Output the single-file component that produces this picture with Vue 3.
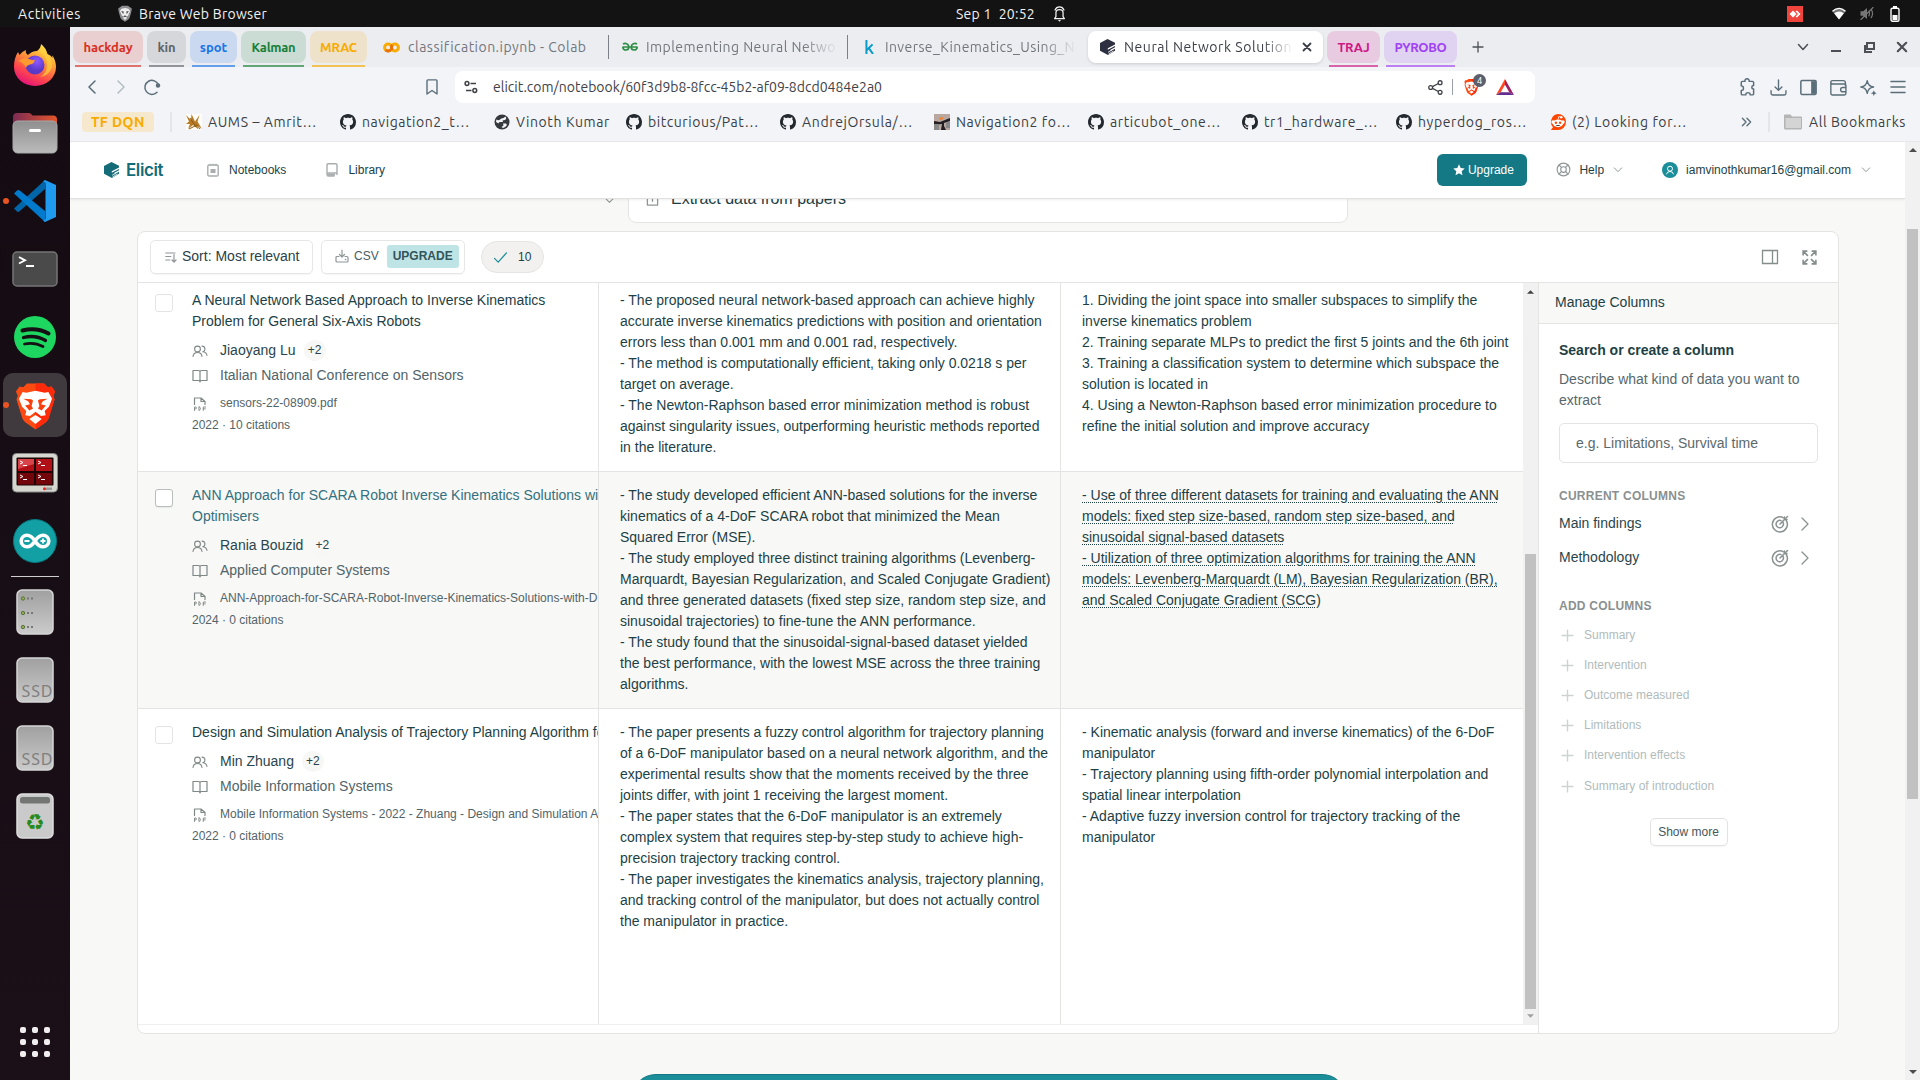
<script setup>
import { h } from 'vue'

// Each icon: [viewBox, inner markup]
const S = 'fill="none" stroke="currentColor" stroke-linecap="round" stroke-linejoin="round"'
const lion = '<path d="M9 2h14l3 3 3-.5 3 4-1.500 3.500 1 3-4.500 14.500c-.5 2-1.600 3.300-3.200 4.500L16 39.500l-7.800-5.500C6.600 32.800 5.500 31.500 5 29.500L.5 15l1-3L0 8.500l3-4L6 5z" fill="#fb4a12"/><path d="M16 2h7l3 3 3-.5 3 4-1.500 3.500 1 3-4.500 14.500c-.5 2-1.600 3.300-3.200 4.500L16 39.500z" fill="#ff2a0a"/><path d="M8.500 9.500L16 8l7.500 1.500 3-.5 3 5.500L27 21l-3.500 3.500.8 3.500-3.800.5L16 25l-4.500 3.500-3.800-.5.8-3.500L5 21l-2.500-6.500 3-5.500z" fill="#fff"/><path d="M6 14.500l6.500.3 1.500 1.200-1.200 4.500 1.200 2-3 1.500-3.500-4 4-1-1.500-2.500zM26 14.500l-6.500.3-1.500 1.200 1.200 4.500-1.200 2 3 1.500 3.500-4-4-1 1.500-2.500z" fill="#f8400f"/><path d="M11 31l5-3.200 5 3.200-5 4z" fill="#fff"/>'
const icons = {
  github: ['0 0 16 16', '<path fill="#24292f" d="M8 0C3.580 0 0 3.580 0 8c0 3.540 2.290 6.530 5.470 7.590.4.070.55-.17.55-.38 0-.19-.01-.82-.01-1.490-2.010.37-2.530-.49-2.690-.94-.09-.23-.48-.94-.82-1.130-.28-.15-.68-.52-.01-.53.63-.01 1.080.58 1.230.82.72 1.210 1.870.87 2.330.66.070-.52.28-.87.51-1.070-1.780-.2-3.640-.89-3.640-3.950 0-.87.31-1.590.82-2.150-.08-.2-.36-1.020.08-2.120 0 0 .67-.21 2.200.82.64-.18 1.320-.27 2-.27.68 0 1.360.09 2 .27 1.530-1.040 2.200-.82 2.200-.82.44 1.100.16 1.920.08 2.120.51.56.82 1.270.82 2.150 0 3.070-1.870 3.750-3.650 3.950.29.25.54.73.54 1.480 0 1.070-.01 1.930-.01 2.200 0 .21.15.46.55.38A8.013 8.013 0 0016 8c0-4.420-3.580-8-8-8z"/>'],
  lion: ['0 0 32 40', lion],
  lionGrey: ['0 0 32 40', '<path d="M9 2h14l9 6.500-1 6.500-4 14.500c-.5 2-1.600 3.300-3.200 4.500L16 39.500l-7.800-5.500C6.600 32.800 5.500 31.500 5 29.500L1 15 0 8.500z" fill="#8b8d90"/><path d="M8 9l8-2 8 2 4 5-5 11-4 2 1 4-4 4-4-4 1-4-4-2-5-11z" fill="#eee"/><path d="M7 14l6 1-1 7zM25 14l-6 1 1 7zM12 27l4-3 4 3-4 2z" fill="#4b4b4d"/>'],
  colab: ['0 0 16 16', `<g fill="none" stroke-width="2.800"><circle cx="4.800" cy="8" r="3.300" stroke="#f9ab00"/><path d="M2.500 10.300a3.300 3.300 0 0 0 4.600 0" stroke="#e8710a"/><circle cx="11.200" cy="8" r="3.300" stroke="#f9ab00"/><path d="M8.900 10.300a3.300 3.300 0 0 1 0-4.600" stroke="#e8710a"/></g>`],
  gfg: ['0 0 16 16', `<g fill="none" stroke="#2f8d46" stroke-width="1.700"><path d="M.5 8h15M1 5.200C3 3.600 6.800 4.600 6.800 8c0 4-5.600 4-6 0M15 5.200C13 3.600 9.200 4.600 9.200 8c0 4 5.600 4 6 0"/></g>`],
  kaggle: ['0 0 10 16', '<path d="M1.500 0v16M8.500 5L2 11.500M4.300 9.300L9 16" fill="none" stroke="#0a9bc9" stroke-width="2.300"/>'],
  elicit: ['0 0 16 16', '<path fill="currentColor" d="M7.500 0L15 3.800v1.700L7.800 9.300v1.500L15 7v1.200l-4.500 2.500v1.500L15 9.800v2L8 16 0 11.800V4z"/><path d="M8 13.300l3.500-2M8.500 15l5-3" stroke="#fff" stroke-width=".8"/>'],
  x: ['0 0 10 10', `<path ${S} stroke-width="1.800" d="M1.500 1.500l7 7M8.500 1.500l-7 7"/>`],
  plus: ['0 0 12 12', `<path ${S} stroke-width="1.300" d="M6 1v10M1 6h10"/>`],
  chevD: ['0 0 12 12', `<path ${S} stroke-width="1.500" d="M1.500 3.500L6 8.500l4.500-5"/>`],
  chevThin: ['0 0 12 12', `<path ${S} stroke-width="1.200" d="M1.500 3.500L6 8l4.500-4.500"/>`],
  chevR: ['0 0 8 14', `<path ${S} stroke-width="1.300" d="M1 1l6 6-6 6"/>`],
  chevL: ['0 0 8 14', `<path ${S} stroke-width="1.500" d="M7 1L1 7l6 6"/>`],
  min: ['0 0 12 12', '<path d="M1 10h10" stroke="currentColor" stroke-width="2"/>'],
  restore: ['0 0 12 12', '<path d="M4 2h7v6H4zM2 4v7h7" fill="none" stroke="currentColor" stroke-width="2"/>'],
  reload: ['0 0 18 18', `<path ${S} stroke-width="1.500" d="M14 14.200A7 7 0 1 1 15.500 7"/><circle cx="15" cy="7.500" r="2.200" fill="currentColor"/>`],
  mark: ['0 0 12 16', `<path ${S} stroke-width="1.400" d="M1 1.800q0-.9.900-.9h8.200q.9 0 .9.900V15l-5-3.500L1 15z"/>`],
  tune: ['0 0 14 14', `<g fill="none" stroke="currentColor" stroke-width="1.500"><circle cx="3" cy="3.500" r="1.900"/><path d="M6.500 3.500H12M2 10.500h5.500"/><circle cx="10.800" cy="10.500" r="1.900"/></g>`],
  share: ['0 0 14 14', `<g fill="none" stroke="currentColor" stroke-width="1.200"><circle cx="2.500" cy="7" r="1.800"/><circle cx="11.300" cy="2.500" r="1.800"/><circle cx="11.300" cy="11.500" r="1.800"/><path d="M4.200 6.200l5.500-2.900M4.200 7.800l5.500 2.900"/></g>`],
  bat: ['0 0 18 16', '<path d="M9 0L0 16l4.700-2.800L9 5.700z" fill="#ff4724"/><path d="M9 0l9 16-4.700-2.800L9 5.700z" fill="#9e1f63"/><path d="M0 16h18l-4.700-2.800H4.700z" fill="#662d91"/>'],
  puzzle: ['0 0 16 16', `<path ${S} stroke-width="1.300" d="M2 4q0-1 1-1h2.300a1.900 1.900 0 1 1 3.700 0H12q1 0 1 1v2.600a1.600 1.600 0 0 0 0 3.200 1.600 1.600 0 0 1 0 1V14q0 1-1 1h-2a2 2 0 0 0-4 0H3q-1 0-1-1v-3a2 2 0 0 0 0-4z"/>`],
  down: ['0 0 16 16', `<path ${S} stroke-width="1.300" d="M8 1v9.500M4.800 7.500L8 10.700l3.200-3.200M1 11v2.500Q1 15 2.500 15h11q1.500 0 1.500-1.500V11"/>`],
  side: ['0 0 16 16', '<rect x=".8" y="1.500" width="14.400" height="13" rx="1" fill="none" stroke="currentColor" stroke-width="1.400"/><path d="M10.500 2H15v12h-4.500z" fill="currentColor"/>'],
  wallet: ['0 0 16 16', `<path ${S} stroke-width="1.300" d="M14.500 6V3.500Q14.500 1.500 12.500 1.500H2.500Q.8 1.500.8 3.300q0 1.400 1.700 1.400h11Q15 4.700 15 6.200v7.300q0 1.500-1.500 1.500h-11Q.8 15 .8 13.300v-10M15 8h-3a2 2 0 0 0 0 4h3z"/>`],
  spark: ['0 0 16 16', `<path ${S} stroke-width="1.300" d="M6.800 1.500Q7.500 6.800 12.800 7.500 7.500 8.200 6.800 13.500 6.100 8.200.8 7.500 6.100 6.800 6.800 1.500z"/><path d="M13 10.500l.8 2 2 .8-2 .8-.8 2-.8-2-2-.8 2-.8z" fill="currentColor"/>`],
  menu: ['0 0 16 14', `<path ${S} stroke-width="1.500" d="M1 1.500h14M1 7h14M1 12.500h14"/>`],
  aums: ['0 0 16 16', '<rect width="16" height="16" fill="#fffdf8"/><path d="M0 1l5 5L5.500 0 9 7.500 13.500 1l-2 6.500L16 15l-5-4 1.500 4.500L7 11l-5 4 2-5-4 0 3-2.500z" fill="#b87a25"/><path d="M3 15l8-4 3 4M4 4l6 9" stroke="#8b5a14" fill="none"/>'],
  globe: ['0 0 16 16', '<circle cx="8" cy="8" r="7.500" fill="#35383c"/><path d="M11.500 2.500Q13 4.500 11 6L8.500 6.500 9 8H6q-1.500 0-1.500 1.500L2 8q0-1 .5-2.500Q5 7 6 5.500T9.500 4zM9 9.500h3l1 1.500q-1.500 2.500-4 3l-1.500-1 2-1.500z" fill="#f3f4f7"/>'],
  nav2: ['0 0 16 16', '<rect width="16" height="16" fill="#b8a8a0"/><path d="M0 7l6 1 10-4v3l-6 2v3l2 4H7l1-6-8 1z" fill="#241f22"/><path d="M5 4l4-1v2l-3 1z" fill="#f08030"/><path d="M0 10h5v6H0zM12 8h4v6h-4z" fill="#888"/>'],
  reddit: ['0 0 16 16', '<path d="M8 0a8 8 0 1 1 0 16H.8L3 13.300A8 8 0 0 1 8 0z" fill="#ff4500"/><circle cx="3" cy="8" r="1.700" fill="#fff"/><circle cx="13" cy="8" r="1.700" fill="#fff"/><ellipse cx="8" cy="9.300" rx="5.200" ry="3.900" fill="#fff"/><circle cx="5.900" cy="8.700" r="1.200" fill="#ff4500"/><circle cx="10.100" cy="8.700" r="1.200" fill="#ff4500"/><path d="M5.500 11q2.500 2 5 0z" fill="#222"/><path d="M8 5.500l.8-3 2 .6" stroke="#fff" fill="none" stroke-width=".8"/><circle cx="11.300" cy="3.200" r="1.200" fill="#fff"/>'],
  dbl: ['0 0 12 12', `<path ${S} stroke-width="1.500" d="M1.500 2l4 4-4 4M6.500 2l4 4-4 4"/>`],
  folder: ['0 0 18 16', '<path d="M0 1.500Q0 .5 1 .5h5.500L8 2.500h9q1 0 1 1V14q0 1.500-1.500 1.500h-15Q0 15.500 0 14z" fill="#b4b4b4"/><path d="M1.500 4h15.500v10H1.500z" fill="#d4d4d4"/>'],
  bell: ['0 0 14 18', `<path ${S} stroke-width="1.400" d="M1.500 14.300h11L11 12V7.500Q11 4 7 4T3 7.500V12zM2 4.500Q3.500 1 7 1t5 3.500"/><path d="M5.300 15.800h3.400L7 17.800z" fill="currentColor"/>`],
  anydesk: ['0 0 16 16', '<rect width="16" height="16" fill="#ef443b"/><path d="M6 4.500L9.500 8 6 11.500 2.500 8zM8.500 5.300L10 4.500 13.500 8 10 11.500l-1.500-.8L11 8z" fill="#fff"/>'],
  wifi: ['0 0 16 14', '<path d="M8 13.500L.8 4.500Q8-2 15.200 4.500z" fill="#777"/><path d="M8 13.500L2.800 6.800q5.200-4 10.400 0z" fill="#fff"/><path d="M1 4.500Q8-1.500 15 4.500" fill="none" stroke="#fff" stroke-width="1.400"/>'],
  mute: ['0 0 16 14', `<path d="M1 4.500h3L8 1v12L4 9.500H1z" fill="currentColor"/><path ${S} stroke-width="1.300" d="M10 4.500q1.500 2.500 0 5M12.500 2.500q3 4.500 0 9M1.500 13.500L14.500.5"/>`],
  batt: ['0 0 10 16', '<rect x="1" y="2.200" width="8" height="13" rx="1.500" fill="none" stroke="#fff" stroke-width="1.400"/><path d="M3 0h4v2H3zM2.500 9h5v5h-5z" fill="#fff"/>'],
  notebook: ['0 0 12 14', `<rect x=".8" y="2" width="10.400" height="11" rx="1.300" ${S} stroke-width="1.400"/><path d="M3 .8v2M6 .8v2M9 .8v2" stroke="currentColor" stroke-width="1.200"/><path d="M3.500 6h5v4h-5z" fill="currentColor"/>`],
  library: ['0 0 12 14', `<path ${S} stroke-width="1.400" d="M1 11.500V2q0-1.200 1.200-1.200h7.600Q11 .8 11 2v8H2.500q-1.500 0-1.500 1.500T2.500 13H8M11 10v1.500"/><path d="M1.500 10.800h7.500v2H2z" fill="currentColor"/>`],
  star: ['0 0 12 12', '<path fill="currentColor" d="M6 .3l1.700 3.700 4 .5-3 2.700.8 4L6 9.200l-3.500 2 .8-4-3-2.700 4-.5z"/>'],
  buoy: ['0 0 16 16', `<g ${S} stroke-width="1.200"><circle cx="8" cy="8" r="6.800"/><circle cx="8" cy="8" r="3"/><path d="M3.200 3.200l2.600 2.600M12.800 3.200l-2.600 2.600M3.200 12.800l2.600-2.600M12.800 12.800l-2.600-2.600"/></g>`],
  avatar: ['0 0 16 16', '<circle cx="8" cy="8" r="8" fill="#1b8e99"/><circle cx="8" cy="6.700" r="2.500" fill="none" stroke="#fff"/><path d="M4.500 12.300Q5 9.500 8 9.500t3.500 2.800" fill="none" stroke="#fff"/>'],
  sort: ['0 0 12 12', `<path ${S} stroke-width="1.200" d="M.8 2h9.200M.8 5.500h5M.8 9h4M9 3.500V11M7 9l2 2 2-2"/>`],
  csv: ['0 0 14 14', `<path ${S} stroke-width="1.200" d="M7 1v7M4.500 5.500L7 8l2.500-2.500M4 7.500H2Q1 7.500 1 8.500V12q0 1 1 1h10q1 0 1-1V8.500q0-1-1-1h-2"/><circle cx="10.500" cy="10.500" r=".8" fill="currentColor"/>`],
  check: ['0 0 16 12', `<path ${S} stroke-width="1.400" d="M1.500 7l4 4 9-10"/>`],
  pane: ['0 0 18 16', '<path d="M1.500 1.500h15v13h-15zM11.500 1.500v13" fill="none" stroke="currentColor" stroke-width="1.300"/>'],
  expand: ['0 0 16 16', `<path fill="none" stroke="currentColor" stroke-width="1.500" d="M2 6V2h4M10 2h4v4M14 10v4h-4M6 14H2v-4M2 2l4.500 4.500M14 2L9.500 6.500M14 14L9.500 9.500M2 14l4.500-4.500"/>`],
  people: ['0 0 16 12', `<g ${S} stroke-width="1.100"><circle cx="5.500" cy="4" r="2.900"/><path d="M1 11.500Q1.500 7.500 5.500 7.500T10 11.500M10 1.100a2.900 2.900 0 0 1 .8 5.700Q14.500 7.300 15 10.500"/></g>`],
  book: ['0 0 16 14', `<path ${S} stroke-width="1.200" d="M1 1.500h5.500Q8 1.500 8 3q0-1.500 1.500-1.500H15v10H9.500Q8 11.500 8 13q0-1.500-1.500-1.500H1zM8 3v10"/>`],
  pdf: ['0 0 16 14', `<path ${S} stroke-width="1.200" d="M2.500 7.500V1h6.500L13 4.500v3M9 1v3.500h4"/><path ${S} stroke-width=".9" d="M2.500 13.500V10H4q.9.900 0 1.900H2.500M6.900 10v3.300h.8q1.700-1.600 0-3.300zM11.300 13.500V10h2.300M11.300 11.800h2"/>`],
  target: ['0 0 18 18', `<g ${S} stroke-width="1.500"><path d="M15.300 5.500A7.500 7.500 0 1 1 12.500 2.800M11.800 7A3.700 3.700 0 1 1 10 5.600M9 9l7.500-7.500"/><path d="M13.500 2v2.500H16"/></g>`],
  extract: ['0 0 14 14', `<path ${S} stroke-width="1.400" d="M4 4.500H1.500V13h11V4.500H10M7 9V1M5 3l2-2 2 2"/>`],
  up: ['0 0 8 4', '<path d="M4 0l4 4H0z" fill="currentColor"/>'],
  dn: ['0 0 8 4', '<path d="M4 4l4-4H0z" fill="currentColor"/>'],
  firefox: ['0 0 42 44', '<defs><linearGradient id="ff" x1=".8" y1="0" x2=".3" y2="1"><stop offset="0" stop-color="#fff44f"/><stop offset=".35" stop-color="#ffa436"/><stop offset=".7" stop-color="#ff4a4a"/><stop offset="1" stop-color="#e3107c"/></linearGradient><radialGradient id="fp" cx=".6" cy=".3"><stop offset="0" stop-color="#9059ff"/><stop offset="1" stop-color="#5b3ac8"/></radialGradient></defs><path d="M27 1q5 4 6.500 10 3 1 5 4-.5-2 0-2.500Q42 18 42 24a21 19 0 0 1-42 0q0-9 4-15l1.500 3Q8 8.500 12 7q-1 3 2 5 4-4 9-4Q27 5 27 1z" fill="url(#ff)"/><circle cx="21" cy="22" r="9.500" fill="url(#fp)"/><path d="M4 18q6-4 11-2 3 1.500 6 1-1 4-5 4.500-3 .5-4 3Q9 19 4 18z" fill="#ff9a2e"/><path d="M26 9q7 4 7 13 0 8-7 12 9-1 12-10 0-9-5-13l-6-9z" fill="#ffd03e" opacity=".7"/>'],
  files: ['0 0 46 42', '<defs><linearGradient id="fo"><stop offset="0" stop-color="#7d2b54"/><stop offset="1" stop-color="#e4562a"/></linearGradient><linearGradient id="fg" x2="0" y2="1"><stop offset="0" stop-color="#8f8f8f"/><stop offset="1" stop-color="#bbb"/></linearGradient></defs><path d="M1 5q0-4 4-4h12q2 0 3.500 2.500H41q4 0 4 4V20H1z" fill="url(#fo)"/><rect x="1" y="9" width="44" height="32" rx="4.500" fill="url(#fg)" stroke="#a8a8a8"/><rect x="17" y="17" width="12" height="3" rx="1.500" fill="#fff"/>'],
  vscode: ['0 0 42 42', '<path d="M0 28.500l3.500 3.500 1.500-.2L31 9V0L0 28.500z" fill="#0065a9"/><path d="M0 13.500L3.500 10l2 .2L31 31v11L0 13.500z" fill="#007acc"/><path d="M31 0l11 5v32l-11 5-2-1.500q2.500 0 2.500-2.500V4Q31.500 1.500 29 1.500z" fill="#1f9cf0"/>'],
  term: ['0 0 46 36', '<rect x="1" y="1" width="44" height="34" rx="4" fill="#4a4a4a" stroke="#757575" stroke-width="1.500"/><path d="M7 6l6 3.300L7 12.500M14 15h8" fill="none" stroke="#fff" stroke-width="1.900"/>'],
  spotify: ['0 0 42 42', '<circle cx="21" cy="21" r="21" fill="#1ed760"/><g fill="none" stroke="#151014" stroke-linecap="round"><path d="M8.500 14.500q14-3.500 26 3" stroke-width="4"/><path d="M9.500 21.500q12-3 22 3" stroke-width="3.300"/><path d="M10.500 28q10-2.200 18.500 2.500" stroke-width="2.800"/></g>'],
  terminator: ['0 0 46 40', '<rect x=".5" y=".5" width="45" height="38.500" rx="4" fill="#d6d8d0" stroke="#888"/><rect x="4.500" y="4.500" width="37" height="28" rx="1" fill="#1c0505"/><path d="M6 6h16v12H6zM24 6h16v12H24z" fill="#b01016"/><path d="M6 20h16v11.500H6zM24 20h16v11.500H24z" fill="#72060a"/><path d="M6 6h16v5L6 16z" fill="#d8444a"/><path d="M8 8l3 1.500L8 11M11 12.500h4M26 8l3 1.500-3 1.500M29 12.500h4M8 22l3 1.500L8 25M11 26.500h4M26 22l3 1.500-3 1.500M29 26.500h4" fill="none" stroke="#fff"/><rect x="34" y="34.500" width="6" height="2.500" fill="#999"/><circle cx="32.500" cy="35.700" r="1.500" fill="#e22"/>'],
  arduino: ['0 0 44 44', '<circle cx="22" cy="22" r="21.500" fill="#12a0a5" stroke="#067a80"/><path d="M22 22c-2.500-4-5-5.800-8-5.800a5.800 5.800 0 0 0 0 11.600c3 0 5.500-1.800 8-5.800s5-5.800 8-5.800a5.800 5.800 0 0 1 0 11.600c-3 0-5.500-1.800-8-5.800z" fill="none" stroke="#fff" stroke-width="3.600"/><path d="M11.500 22h5M27.500 22h5M30 19.500v5" stroke="#fff" stroke-width="1.800"/>'],
  disk: ['0 0 38 46', '<defs><linearGradient id="dg" x2="0" y2="1"><stop offset="0" stop-color="#a0a0a0"/><stop offset="1" stop-color="#cbcbcb"/></linearGradient></defs><rect x="1" y="1" width="36" height="44" rx="5" fill="url(#dg)" stroke="#d6d6d6" stroke-width="1.500"/><g fill="#8bb04a" stroke="#5f7040"><circle cx="7" cy="9.500" r="1.700"/><circle cx="7" cy="24" r="1.700"/><circle cx="7" cy="38" r="1.700"/></g><path d="M11 9.500h2M15 9.500h2M11 24h2M15 24h2M11 38h2M15 38h2" stroke="#777" stroke-width="2"/>'],
  ssd: ['0 0 38 46', '<rect x="1" y="1" width="36" height="44" rx="5" fill="url(#dg)" stroke="#d6d6d6" stroke-width="1.500"/><text x="5.500" y="39.500" font-family="Noto Sans, sans-serif" font-size="16" textLength="31" fill="#7f7f7f">SSD</text>'],
  trash: ['0 0 38 46', '<rect x="1" y="1" width="36" height="44" rx="5" fill="#cacaca" stroke="#dedede" stroke-width="1.500"/><rect x="4" y="4" width="30" height="6.500" rx="2.500" fill="#747674"/><text x="19" y="36.500" text-anchor="middle" font-family="DejaVu Sans, sans-serif" font-size="22" fill="#288a1c">♻</text>'],
}
const Icon = (p) => h('svg', { viewBox: icons[p.n][0], width: p.w, height: p.h || p.w, innerHTML: icons[p.n][1] })
Icon.props = ['n', 'w', 'h']

// Tracks a label so that it fills the given width
const vFit = {
  mounted(el, { value }) {
    const w = el.getBoundingClientRect().width
    el.style.letterSpacing = (value - w) / el.textContent.length + 'px'
  },
}

const dockTop = [
  ['firefox', 42, 44], ['files', 46, 42], ['vscode', 42, 42, 1], ['term', 46, 36], ['spotify', 42, 42],
  ['lion', 41, 49, 1, 1], ['terminator', 46, 40], ['arduino', 44, 44],
]
const dockLow = [['disk', 38, 46], ['ssd', 38, 46], ['ssd', 38, 46], ['trash', 38, 46]]
const groupsL = [
  ['hackday', 'red', 70, 49], ['kin', 'grey', 39, 18], ['spot', 'blue', 47, 27.500], ['Kalman', 'green', 65, 44], ['MRAC', 'amber', 57, 37],
]
const groupsR = [['TRAJ', 'pink', 53, 32], ['PYROBO', 'purple', 73, 52]]
const marks = [
  ['aums', 'AUMS – Amrit…', 109], ['github', 'navigation2_t…', 108], ['globe', 'Vinoth Kumar', 94, 1], ['github', 'bitcurious/Pat…', 111],
  ['github', 'AndrejOrsula/…', 111], ['nav2', 'Navigation2 fo…', 115], ['github', 'articubot_one…', 111], ['github', 'tr1_hardware_…', 114],
  ['github', 'hyperdog_ros…', 109], ['reddit', '(2) Looking for…', 115],
]
const tools = [['puzzle', 18], ['down', 17], ['side', 17], ['wallet', 17], ['spark', 17], ['menu', 16]]

const rows = [
  {
    cls: 'r1', title: 'A Neural Network Based Approach to Inverse Kinematics\nProblem for General Six-Axis Robots',
    author: 'Jiaoyang Lu', venue: 'Italian National Conference on Sensors', pdf: 'sensors-22-08909.pdf', cite: '2022 · 10 citations',
    find: `- The proposed neural network-based approach can achieve highly
accurate inverse kinematics predictions with position and orientation
errors less than 0.001 mm and 0.001 rad, respectively.
- The method is computationally efficient, taking only 0.0218 s per
target on average.
- The Newton-Raphson based error minimization method is robust
against singularity issues, outperforming heuristic methods reported
in the literature.`,
    meth: `1. Dividing the joint space into smaller subspaces to simplify the
inverse kinematics problem
2. Training separate MLPs to predict the first 5 joints and the 6th joint
3. Training a classification system to determine which subspace the
solution is located in
4. Using a Newton-Raphson based error minimization procedure to
refine the initial solution and improve accuracy`,
  },
  {
    cls: 'r2', title: 'ANN Approach for SCARA Robot Inverse Kinematics Solutions with\nOptimisers',
    author: 'Rania Bouzid', venue: 'Applied Computer Systems', pdf: 'ANN-Approach-for-SCARA-Robot-Inverse-Kinematics-Solutions-with-Di', cite: '2024 · 0 citations',
    find: `- The study developed efficient ANN-based solutions for the inverse
kinematics of a 4-DoF SCARA robot that minimized the Mean
Squared Error (MSE).
- The study employed three distinct training algorithms (Levenberg-
Marquardt, Bayesian Regularization, and Scaled Conjugate Gradient)
and three generated datasets (fixed step size, random step size, and
sinusoidal trajectories) to fine-tune the ANN performance.
- The study found that the sinusoidal-signal-based dataset yielded
the best performance, with the lowest MSE across the three training
algorithms.`,
    meth: `- Use of three different datasets for training and evaluating the ANN
models: fixed step size-based, random step size-based, and
sinusoidal signal-based datasets
- Utilization of three optimization algorithms for training the ANN
models: Levenberg-Marquardt (LM), Bayesian Regularization (BR),
and Scaled Conjugate Gradient (SCG)`,
  },
  {
    cls: 'r3', title: 'Design and Simulation Analysis of Trajectory Planning Algorithm for',
    author: 'Min Zhuang', venue: 'Mobile Information Systems', pdf: 'Mobile Information Systems - 2022 - Zhuang - Design and Simulation A', cite: '2022 · 0 citations',
    find: `- The paper presents a fuzzy control algorithm for trajectory planning
of a 6-DoF manipulator based on a neural network algorithm, and the
experimental results show that the moments received by the three
joints differ, with joint 1 receiving the largest moment.
- The paper states that the 6-DoF manipulator is an extremely
complex system that requires step-by-step study to achieve high-
precision trajectory tracking control.
- The paper investigates the kinematics analysis, trajectory planning,
and tracking control of the manipulator, but does not actually control
the manipulator in practice.`,
    meth: `- Kinematic analysis (forward and inverse kinematics) of the 6-DoF
manipulator
- Trajectory planning using fifth-order polynomial interpolation and
spatial linear interpolation
- Adaptive fuzzy inversion control for trajectory tracking of the
manipulator`,
  },
]
const addable = ['Summary', 'Intervention', 'Outcome measured', 'Limitations', 'Intervention effects', 'Summary of introduction']
</script>

<template>
  <div class="screen">
    <div class="topbar">
      <span class="act"><span v-fit="63">Activities</span></span>
      <Icon n="lionGrey" w="14" h="17" />
      <span class="appname"><span v-fit="128">Brave Web Browser</span></span>
      <span class="clock"><span v-fit="79">Sep 1&nbsp; 20:52</span></span>
      <Icon n="bell" w="13" h="16" />
      <div class="tray">
        <Icon n="anydesk" w="16" class="any" />
        <Icon n="wifi" w="16" h="13" />
        <Icon n="mute" w="16" h="13" class="mute" />
        <Icon n="batt" w="10" h="16" />
      </div>
    </div>

    <div class="desk">
      <aside class="dock">
        <div v-for="d in dockTop" :key="d[0]" class="app" :class="{ run: d[3], cur: d[4] }">
          <Icon :n="d[0]" :w="d[1]" :h="d[2]" />
        </div>
        <div class="rule"></div>
        <div v-for="(d, i) in dockLow" :key="i" class="app"><Icon :n="d[0]" :w="d[1]" :h="d[2]" /></div>
        <div class="grid9"><i v-for="n in 9" :key="n"></i></div>
      </aside>

      <div class="browser">
        <div class="tabs">
          <div v-for="g in groupsL" :key="g[0]" class="group" :class="g[1]" :style="{ width: g[2] + 'px' }">
            <b><span v-fit="g[3]">{{ g[0] }}</span></b><i></i>
          </div>
          <div class="tab t1"><Icon n="colab" w="17" /><span v-fit="178">classification.ipynb - Colab</span></div>
          <div class="tsep"></div>
          <div class="tab t2"><Icon n="gfg" w="16" /><div class="fade"><span v-fit="190">Implementing Neural Netwo</span></div></div>
          <div class="tsep"></div>
          <div class="tab t3"><Icon n="kaggle" w="9" h="14" /><div class="fade"><span v-fit="190">Inverse_Kinematics_Using_N</span></div></div>
          <div class="tab active">
            <Icon n="elicit" w="16" class="fav" /><div class="fade"><span v-fit="168">Neural Network Solution</span></div><Icon n="x" w="10" />
          </div>
          <div v-for="g in groupsR" :key="g[0]" class="group" :class="g[1]" :style="{ width: g[2] + 'px' }">
            <b><span v-fit="g[3]">{{ g[0] }}</span></b><i></i>
          </div>
          <Icon n="plus" w="12" class="newtab" />
          <div class="winbtns">
            <Icon n="chevD" w="12" /><Icon n="min" w="12" /><Icon n="restore" w="12" /><Icon n="x" w="12" />
          </div>
        </div>

        <div class="toolbar">
          <Icon n="chevL" w="8" h="14" class="bk" />
          <Icon n="chevR" w="8" h="14" class="fw" />
          <Icon n="reload" w="18" class="rl" />
          <Icon n="mark" w="12" h="16" class="bm" />
          <div class="url">
            <Icon n="tune" w="14" />
            <span v-fit="389" class="addr">elicit.com/notebook/60f3d9b8-8fcc-45b2-af09-8dcd0484e2a0</span>
            <div class="urlr">
              <Icon n="share" w="15" /><div class="usep"></div>
              <div class="shield"><Icon n="lion" w="15" h="18" /><em>4</em></div>
              <Icon n="bat" w="18" h="16" />
            </div>
          </div>
          <div class="tools"><Icon v-for="t in tools" :key="t[0]" :n="t[0]" :w="t[1]" /></div>
        </div>

        <div class="marks">
          <div class="chip"><span v-fit="54">TF DQN</span></div>
          <div class="msep"></div>
          <div v-for="(m, i) in marks" :key="i" class="mark" :class="{ short: m[3] }">
            <Icon :n="m[0]" w="16" /><span v-fit="m[2]">{{ m[1] }}</span>
          </div>
          <Icon n="dbl" w="11" class="dbl" />
          <div class="msep m2"></div>
          <Icon n="folder" w="18" h="16" /><span v-fit="97" class="allb">All Bookmarks</span>
        </div>

        <div class="page">
          <div class="site">
            <header>
              <Icon n="elicit" w="16" class="logo" /><div class="brand"><span v-fit="37">Elicit</span></div>
              <Icon n="notebook" w="12" h="14" class="nb" /><span class="nav">Notebooks</span>
              <Icon n="library" w="12" h="14" class="lb" /><span class="nav">Library</span>
              <div class="hr">
                <div class="upg"><Icon n="star" w="12" />Upgrade</div>
                <Icon n="buoy" w="15" class="g" /><span class="help">Help</span><Icon n="chevThin" w="10" class="g" />
                <Icon n="avatar" w="16" class="av" /><span class="mail">iamvinothkumar16@gmail.com</span><Icon n="chevThin" w="10" class="g" />
              </div>
            </header>

            <div class="steprow">
              <Icon n="chevThin" w="11" class="g stepch" />
              <div class="step"><Icon n="extract" w="13" class="g" /><span v-fit="175">Extract data from papers</span></div>
            </div>

            <section class="panel">
              <div class="ptools">
                <div class="btn sort"><Icon n="sort" w="12" class="g" />Sort: Most relevant</div>
                <div class="btn csv"><Icon n="csv" w="14" class="g" />CSV<b>UPGRADE</b></div>
                <div class="count"><Icon n="check" w="15" h="11" />10</div>
                <div class="pright"><Icon n="pane" w="18" h="16" /><Icon n="expand" w="17" /></div>
              </div>
              <div class="pbody">
                <div class="table">
                  <div class="scroll">
                    <div v-for="r in rows" :key="r.cls" class="row" :class="r.cls">
                      <div class="paper">
                        <div class="box"></div>
                        <div class="info">
                          <div class="title">{{ r.title }}</div>
                          <div class="line author"><Icon n="people" w="16" h="12" />{{ r.author }}<span class="more">+2</span></div>
                          <div class="line venue"><Icon n="book" w="16" h="14" />{{ r.venue }}</div>
                          <div class="line pdf"><Icon n="pdf" w="16" h="14" />{{ r.pdf }}</div>
                          <div class="cite">{{ r.cite }}</div>
                        </div>
                      </div>
                      <div class="cell">{{ r.find }}</div>
                      <div class="cell"><span>{{ r.meth }}</span></div>
                    </div>
                  </div>
                  <div class="bar inner"><Icon n="up" w="7" h="4" /><i></i><Icon n="dn" w="7" h="4" class="dim" /></div>
                </div>
                <aside class="manage">
                  <h3>Manage Columns</h3>
                  <div class="mbody">
                    <h4>Search or create a column</h4>
                    <p>Describe what kind of data you want to<br />extract</p>
                    <div class="input">e.g. Limitations, Survival time</div>
                    <h5>CURRENT COLUMNS</h5>
                    <div v-for="c in ['Main findings', 'Methodology']" :key="c" class="col">
                      <span>{{ c }}</span><Icon n="target" w="18" /><Icon n="chevR" w="8" h="14" />
                    </div>
                    <h5 class="add">ADD COLUMNS</h5>
                    <div v-for="a in addable" :key="a" class="opt"><Icon n="plus" w="13" />{{ a }}</div>
                    <div class="showmore">Show more</div>
                  </div>
                </aside>
              </div>
            </section>
            <div class="drawer"></div>
          </div>
          <div class="bar outer"><Icon n="up" w="8" h="4" /><i></i><Icon n="dn" w="8" h="4" /></div>
        </div>
      </div>
    </div>
  </div>
</template>

<style>
html, body { margin: 0; overflow: hidden; }
</style>

<style scoped>
* { box-sizing: border-box; }
svg { flex: none; display: block; }
.screen { width: 1920px; height: 1080px; display: flex; flex-direction: column; overflow: hidden; font-family: Ubuntu, "Noto Sans", sans-serif; font-size: 14px; white-space: nowrap; }
.topbar { height: 27px; background: #131313; color: #f2f2f2; display: flex; align-items: center; padding-left: 18px; flex: none; }
.topbar > span { flex: none; }
.act { width: 100px; }
.appname { margin-left: 7px; width: 817px; }
.clock { width: 97px; }
.tray { margin-left: auto; display: flex; align-items: center; padding-right: 20px; }
.any { margin-right: 28px; }
.mute { margin: 0 15px 0 12px; color: #777; }
.desk { flex: 1; display: flex; min-height: 0; }
.dock { width: 70px; background: linear-gradient(#140c12, #1b0f18); padding: 6px 3px 0; display: flex; flex-direction: column; gap: 4px; }
.app { height: 64px; flex: none; border-radius: 10px; display: flex; align-items: center; justify-content: center; position: relative; }
.cur { background: #403a3f; }
.run::before { content: ""; position: absolute; left: 0; top: 29px; width: 6px; height: 6px; border-radius: 50%; background: #e95420; }
.rule { height: 1px; background: #d0cdcf; margin: -1px 8px -1px; flex: none; }
.grid9 { margin: auto auto 23px; display: grid; grid-template-columns: repeat(3, 6px); gap: 6px; }
.grid9 i { height: 6px; background: #f0eeef; border-radius: 2px; }
.browser { flex: 1; display: flex; flex-direction: column; min-width: 0; background: #f3f4f7; }
.tabs { height: 40px; background: #ecedf1; display: flex; padding: 4px 0 0 3px; flex: none; }
.group { margin-right: 4px; flex: none; }
.group b { display: flex; height: 32px; border-radius: 8px; align-items: center; justify-content: center; font-size: 13px; font-weight: 600; background: color-mix(in srgb, currentColor 16%, #ecedf1); }
.group i { display: block; height: 2px; margin: 2px 2px 0; background: currentColor; opacity: .65; }
.red { color: #d93025; } .grey { color: #5f6368; } .blue { color: #1a73e8; } .green { color: #188038; } .amber { color: #f9ab00; } .pink { color: #d01884; } .purple { color: #a142f4; }
.tab { display: flex; align-items: center; height: 32px; color: #73777d; flex: none; }
.t1 { padding-left: 12px; width: 237px; gap: 8px; }
.tsep { width: 1px; height: 24px; background: #7b8087; margin-top: 4px; flex: none; }
.t2 { padding-left: 13px; width: 238px; gap: 8px; }
.t3 { padding-left: 17px; width: 240px; gap: 11px; }
.fade { width: 192px; overflow: hidden; -webkit-mask-image: linear-gradient(90deg, #000 82%, transparent 100%); mask-image: linear-gradient(90deg, #000 82%, transparent 100%); }
.active { background: #fff; border-radius: 8px; width: 235px; margin-right: 4px; padding-left: 12px; gap: 8px; color: #3b3e46; box-shadow: 0 1px 3px #0002; }
.active .fade { width: 169px; margin-right: 1px; }
.fav { color: #2d3040; }
.newtab { margin: 10px 0 0 11px; color: #4c5157; }
.winbtns { margin-left: auto; display: flex; gap: 21px; padding: 10px 12px 0 0; color: #4c4f55; height: 24px; }
.toolbar { height: 40px; display: flex; align-items: center; color: #5a6e7a; flex: none; }
.bk { margin-left: 18px; }
.fw { margin-left: 21px; opacity: .45; }
.rl { margin-left: 18px; }
.bm { margin-left: 265px; }
.url { margin-left: 17px; width: 1080px; height: 32px; border-radius: 8px; background: #fff; display: flex; align-items: center; padding-left: 9px; color: #3f4247; }
.addr { margin-left: 15px; }
.urlr { margin-left: auto; display: flex; align-items: center; padding-right: 21px; }
.usep { width: 1px; height: 16px; background: #9aa0a6; margin: 0 11px 0 9px; }
.shield { position: relative; margin-right: 17px; }
.shield em { position: absolute; left: 9px; top: -4px; width: 13px; height: 13px; border-radius: 50%; background: #5c5f6b; color: #fff; font: 9px/13px "Noto Sans", sans-serif; text-align: center; }
.tools { margin-left: auto; display: flex; gap: 13px; padding-right: 14px; align-items: center; }
.marks { height: 35px; border-bottom: 1px solid #e6e7ea; display: flex; align-items: flex-start; padding: 5px 14px 0 12px; color: #3b3e44; flex: none; }
.marks > *, .mark { height: 20px; align-items: center; flex: none; }
.marks > svg, .mark svg { height: 16px; margin-top: 2px; }
.mark svg { margin-top: 0; }
.chip { width: 72px; background: #f5e8cd; border-radius: 4px; color: #f9ab00; font-weight: 600; display: flex; justify-content: center; }
.msep { width: 2px; background: #e4e5e9; margin: 0 15px 0 16px; }
.mark { display: flex; width: 154px; gap: 6px; margin-left: -1px; margin-right: 1px; }
.mark.short { width: 132px; }
.dbl { margin-left: 36px; color: #5a6e7a; }
.m2 { margin: 0 14px 0 16px; }
.allb { margin-left: auto; line-height: 20px; }
.page { flex: 1; display: flex; min-height: 0; font-family: "Liberation Sans", Arial, sans-serif; }
.site { flex: 1; background: #f8f8f6; display: flex; flex-direction: column; overflow: hidden; color: #1d3f45; }
.g { color: #8f9696; }
header { height: 57px; background: #fff; border-bottom: 1px solid #e2e2e1; box-shadow: 0 1px 2px #0001; display: flex; align-items: center; flex: none; font-size: 12px; padding: 0 34px 1px; z-index: 1; }
.logo { color: #146c78; }
.brand { margin: 0 0 0 6px; font: 600 17px Inter, sans-serif; color: #146c78; width: 37px; }
.nb { margin: 0 10px 0 44px; color: #a9adad; }
.lb { margin: 0 10px 0 40px; color: #a9adad; }
.hr { margin-left: auto; display: flex; align-items: center; }
.upg { width: 90px; height: 32px; background: #147985; color: #fff; border-radius: 6px; display: flex; align-items: center; justify-content: center; gap: 3px; margin-right: 29px; padding-left: 2px; }
.help { margin: 0 9px 0 8px; }
.av { margin: 0 8px 0 39px; }
.mail { margin-right: 10px; }
.steprow { height: 24px; display: flex; align-items: flex-end; overflow: hidden; flex: none; }
.stepch { margin: 0 13px 17px 534px; }
.step { width: 720px; height: 50px; border: 1px solid #e4e4e2; border-radius: 8px; background: #fff; display: flex; align-items: center; padding: 2px 0 0 17px; gap: 12px; font-size: 16px; }
.panel { margin: 8px 0 0 67px; width: 1702px; height: 803px; border: 1px solid #e4e4e2; border-radius: 8px; background: #fff; display: flex; flex-direction: column; overflow: hidden; flex: none; }
.ptools { height: 51px; border-bottom: 1px solid #e4e4e2; display: flex; align-items: center; padding: 0 20px 0 12px; flex: none; }
.btn { height: 34px; border: 1px solid #e6e6e5; border-radius: 5px; display: flex; align-items: center; box-shadow: 0 1px 1px #0000000a; padding-bottom: 2px; }
.sort { width: 163px; margin-right: 8px; padding-left: 14px; gap: 5px; font-size: 14px; color: #2b4146; }
.sort svg { margin-top: 2px; }
.csv { width: 144px; padding-left: 13px; font-size: 12px; gap: 5px; color: #4d5c5f; }
.csv b { margin-left: 3px; width: 72px; height: 23px; line-height: 22px; text-align: center; background: #bfe4e5; border-radius: 3px; color: #32545a; }
.count { margin-left: 16px; width: 63px; height: 32px; border-radius: 16px; background: #f2f1ef; border: 1px solid #e6e5e3; display: flex; align-items: center; padding-left: 11px; gap: 10px; font-size: 12px; }
.count svg { color: #1b8e99; }
.pright { margin-left: auto; display: flex; gap: 22px; color: #858c8c; }
.pbody { flex: 1; display: flex; min-height: 0; }
.table { width: 1400px; display: flex; height: 742px; border-bottom: 1px solid #efefee; flex: none; }
.scroll { flex: 1; min-width: 0; overflow: hidden; font-size: 14px; line-height: 21px; }
.row { display: flex; border-bottom: 1px solid #e4e4e2; }
.row > div { padding-top: 13px; }
.r1 { height: 189px; } .r1 > div { padding-top: 7px; }
.r2 { height: 237px; background: #f8f8f6; } .r3 { height: 316px; border: 0; }
.paper { width: 461px; border-right: 1px solid #e4e4e2; display: flex; overflow: hidden; padding-left: 17px; flex: none; }
.box { width: 18px; height: 18px; border: 1px solid #e4e4e2; border-radius: 3px; background: #fff; margin: 4px 19px 0 0; flex: none; }
.r2 .box { border-color: #b9bdbc; box-shadow: 0 1px 1px #0001; }
.title { white-space: pre; }
.r2 .title { color: #35707f; }
.line { display: flex; align-items: center; height: 21px; color: #51646a; }
.line svg { margin: 1px 12px 0 0; color: #7f8787; }
.author { margin-top: 8px; color: #2a454b; }
.venue { margin-top: 4px; }
.pdf { margin-top: 7px; font-size: 12px; }
.cite { margin-top: 1px; font-size: 12px; color: #51646a; }
.more { margin-left: 8px; width: 22px; height: 21px; border-radius: 50%; background: #f7f7f5; text-align: center; font-size: 12px; }
.cell { width: 461px; padding-left: 21px; white-space: pre; flex: none; }
.cell + .cell { border-left: 1px solid #e4e4e2; }
.r2 .cell span { text-decoration: underline dotted; text-decoration-thickness: 1px; text-underline-offset: 2px; }
.bar { background: #f1f1f1; display: flex; flex-direction: column; align-items: center; color: #4d4d4d; flex: none; width: 15px; }
.bar i { width: 11px; background: #c1c1c1; }
.inner { padding-top: 7px; color: #404040; }
.inner i { height: 455px; margin: 260px 0 5px; }
.dim { color: #a0a0a0; }
.outer { padding-top: 6px; }
.outer i { height: 570px; margin: 77px 0 271px; }
.manage { flex: 1; border-left: 1px solid #e4e4e2; }
.manage h3 { margin: 0; height: 41px; background: #f8f8f6; border-bottom: 1px solid #e4e4e2; font: 14px/38px "Liberation Sans", Arial, sans-serif; padding-left: 16px; }
.mbody { padding: 16px 20px 0 20px; display: flex; flex-direction: column; font-size: 14px; line-height: 21px; }
.mbody h4 { margin: 0; font-size: 14px; }
.mbody p { margin: 8px 0 12px; color: #56686c; }
.input { height: 40px; border: 1px solid #e4e4e2; border-radius: 5px; line-height: 38px; padding-left: 16px; color: #5b696c; }
.mbody h5 { margin: 23px 0 0; font-size: 12px; color: #8a9090; letter-spacing: .25px; }
.col { display: flex; align-items: center; height: 34px; color: #2a454b; padding-right: 9px; position: relative; top: -1px; }
.col span { flex: 1; }
.col svg { color: #8a9191; margin-left: 12px; margin-top: 2px; }
.mbody h5.add { margin: 21px 0 3px; }
.opt { height: 30.200px; display: flex; align-items: center; font-size: 12px; color: #b0bcbc; gap: 10px; padding-left: 2px; }
.opt svg { color: #cdd2d2; }
.showmore { margin: 17px auto 0; width: 78px; height: 28px; border: 1px solid #e2e2e1; border-radius: 5px; font-size: 12px; line-height: 26px; text-align: center; color: #46565a; box-shadow: 0 1px 1px #0000000a; }
.drawer { margin: 40px 0 0 562px; width: 714px; height: 60px; border-radius: 24px; background: #1b8e99; border-top: 1px solid #147985; flex: none; }
</style>
